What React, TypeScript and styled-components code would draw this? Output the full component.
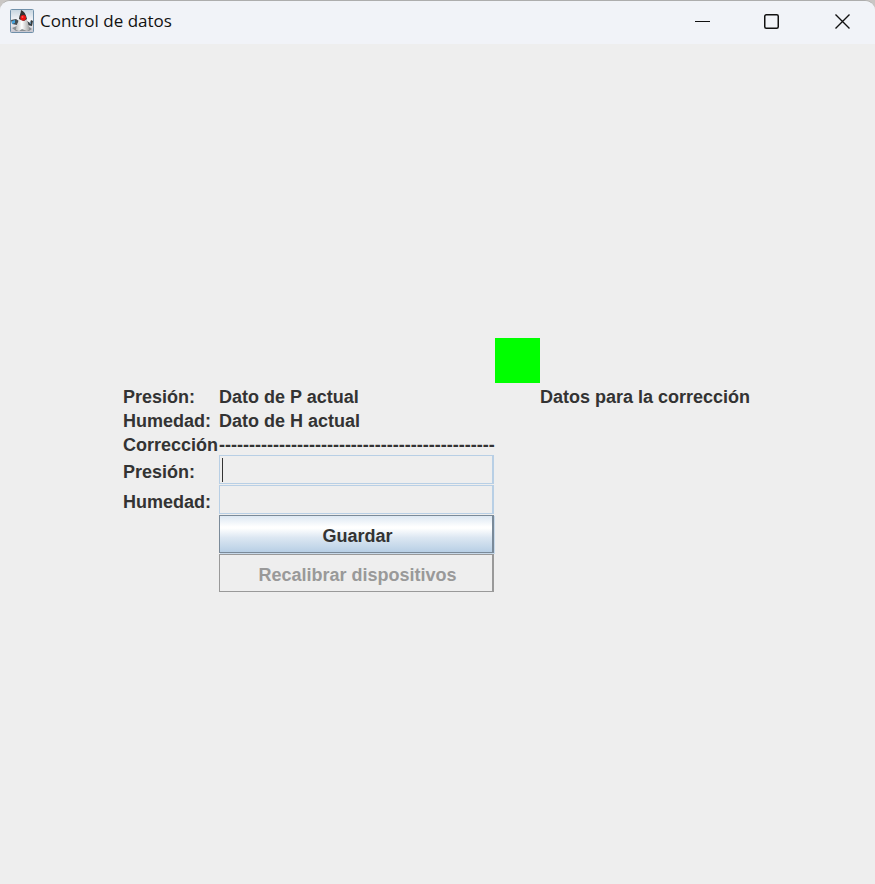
import React from "react";
import styled, { createGlobalStyle } from "styled-components";

const GlobalStyle = createGlobalStyle`
  * { box-sizing: border-box; }
  html { background: #c9c6c4; }
  body { margin: 0; background: #c9c6c4; }
`;

const Window = styled.main`
  display: flex;
  flex-direction: column;
  min-height: 100vh;
  overflow: hidden;
  border-top: 1px solid #adadad;
  border-radius: 10px 10px 0 0;
  background: #eeeeee;
`;

const TitleBar = styled.header`
  display: flex;
  align-items: center;
  height: 43px;
  padding: 0 0 3px 10px;
  background: #f1f3f8;
`;

const Title = styled.h1`
  flex: 1;
  margin: 0 0 0 6px;
  font: 400 17px/24px "Segoe UI", "Open Sans", "Noto Sans", sans-serif;
  color: #111111;
`;

const WindowButton = styled.button`
  display: flex;
  align-items: center;
  justify-content: center;
  width: 70px;
  height: 40px;
  padding: 0;
  border: 0;
  background: transparent;
  color: #111111;
`;

const WindowButtons = styled.div`
  display: flex;
  margin-right: -2px;
`;

const Content = styled.section`
  display: flex;
  flex: 1;
  align-items: center;
  justify-content: center;
  padding-top: 3px;
  font: 700 18px/24px "Liberation Sans", Arial, sans-serif;
  color: #333333;
`;

const Form = styled.form`
  display: grid;
  grid-template-columns: 96px 276px 45px 212px;
  grid-template-rows: 45px repeat(3, 24px) repeat(2, 30px) repeat(2, 39px);
  align-items: center;
  white-space: nowrap;
`;

const Status = styled.div`
  grid-column: 3;
  width: 45px;
  height: 45px;
  background: #00ff00;
`;

const Cell = styled.span<{ $column: number; $row: number }>`
  grid-column: ${(p) => p.$column};
  grid-row: ${(p) => p.$row};
  padding-top: 4px;
`;

const FieldLabel = styled.label<{ $row: number }>`
  grid-column: 1;
  grid-row: ${(p) => p.$row};
  padding-top: 3px;
`;

const FieldBox = styled.div<{ $row: number }>`
  position: relative;
  grid-column: 2;
  grid-row: ${(p) => p.$row};
  height: 30px;
`;

const Field = styled.input`
  display: block;
  width: 275px;
  height: 29px;
  padding: 0 3px;
  border: 1px solid #b8cfe5;
  border-right-width: 2px;
  border-radius: 0;
  outline: 0;
  background: #eeeeee;
  font: 400 18px/24px "Liberation Sans", Arial, sans-serif;
  color: #333333;
`;

const Caret = styled.span`
  position: absolute;
  top: 3px;
  left: 3px;
  width: 1px;
  height: 24px;
  background: #333333;
  pointer-events: none;
`;

const ActionButton = styled.button<{ $row: number }>`
  grid-column: 2;
  grid-row: ${(p) => p.$row};
  align-self: start;
  width: 275px;
  height: 38px;
  padding: 3px 0 0 3px;
  border: 1px solid #7a8a99;
  border-right-width: 2px;
  border-radius: 0;
  background: linear-gradient(#dde8f3 0%, #ffffff 30%, #ffffff 34%, #dce7f2 60%, #b8cfe5 100%);
  box-shadow: 1px 1px 0 #c8d9e9;
  font: inherit;
  color: #333333;

  &:disabled {
    border-color: #999999;
    background: #eeeeee;
    box-shadow: none;
    color: #999999;
  }
`;

function DukeIcon() {
  return (
    <svg width="24" height="24" viewBox="0 0 24 24" aria-hidden="true">
      <defs>
        <linearGradient id="tile" x2="0" y2="1">
          <stop stopColor="#c5d4df" />
          <stop offset=".5" stopColor="#f8f7fa" />
          <stop offset="1" stopColor="#c4c3cc" />
        </linearGradient>
        <linearGradient id="belly">
          <stop stopColor="#bfc0c0" />
          <stop offset=".45" stopColor="#ffffff" />
          <stop offset="1" stopColor="#a9a9a9" />
        </linearGradient>
      </defs>
      <rect x=".5" y=".5" width="23" height="23" rx="1" fill="url(#tile)" stroke="#7090aa" />
      <path d="M2 19l5-2h11l4 3-3 2H6z" fill="#8b8f92" />
      <path d="M1 11l5-1 3 2-2 4-5-1z" fill="#454d52" />
      <path d="M2 12l3-1v3l-3 1z" fill="#48a4dd" />
      <path d="M17 12l3 2 1-3 2 1-1 5-5-1z" fill="#343a3d" />
      <path d="M19 14l2-1v2z" fill="#6c9fc0" />
      <path d="M9.5 9c-1 4-3.500 7-3.500 12l3 1 3-2 5 2 2-1c0-5-1-8-3-12z" fill="url(#belly)" />
      <path d="M11 1c3 1 5 4 6 9l-3 2-3-1-2-1c0-3 2-6 2-9z" fill="#343434" />
      <circle cx="13.200" cy="8.700" r="2.800" fill="#ed1111" />
      <circle cx="12.500" cy="8" r="1" fill="#ff5550" />
    </svg>
  );
}

export default function App() {
  return (
    <>
      <GlobalStyle />
      <Window>
        <TitleBar>
          <DukeIcon />
          <Title>Control de datos</Title>
          <WindowButtons>
            <WindowButton type="button" aria-label="Minimizar">
              <svg width="16" height="16" stroke="currentColor" shapeRendering="crispEdges">
                <path d="M1 8.5h15" />
              </svg>
            </WindowButton>
            <WindowButton type="button" aria-label="Maximizar">
              <svg width="16" height="16" fill="none" stroke="currentColor" strokeWidth="1.5">
                <rect x=".75" y="1.75" width="13.5" height="13.5" rx="1.5" />
              </svg>
            </WindowButton>
            <WindowButton type="button" aria-label="Cerrar">
              <svg width="16" height="16" stroke="currentColor" strokeWidth="1.4">
                <path d="M1.500 1.500l14 14M15.500 1.500l-14 14" />
              </svg>
            </WindowButton>
          </WindowButtons>
        </TitleBar>
        <Content>
          <Form onSubmit={(e) => e.preventDefault()}>
            <Status role="status" aria-label="Estado" />
            <Cell $column={1} $row={2}>Presión:</Cell>
            <Cell $column={2} $row={2}>Dato de P actual</Cell>
            <Cell $column={4} $row={2}>Datos para la corrección</Cell>
            <Cell $column={1} $row={3}>Humedad:</Cell>
            <Cell $column={2} $row={3}>Dato de H actual</Cell>
            <Cell $column={1} $row={4}>Corrección</Cell>
            <Cell $column={2} $row={4}>{"-".repeat(46)}</Cell>
            <FieldLabel htmlFor="presion" $row={5}>Presión:</FieldLabel>
            <FieldBox $row={5}>
              <Field id="presion" type="text" />
              <Caret />
            </FieldBox>
            <FieldLabel htmlFor="humedad" $row={6}>Humedad:</FieldLabel>
            <FieldBox $row={6}>
              <Field id="humedad" type="text" />
            </FieldBox>
            <ActionButton type="submit" $row={7}>Guardar</ActionButton>
            <ActionButton type="button" disabled $row={8}>Recalibrar dispositivos</ActionButton>
          </Form>
        </Content>
      </Window>
    </>
  );
}
